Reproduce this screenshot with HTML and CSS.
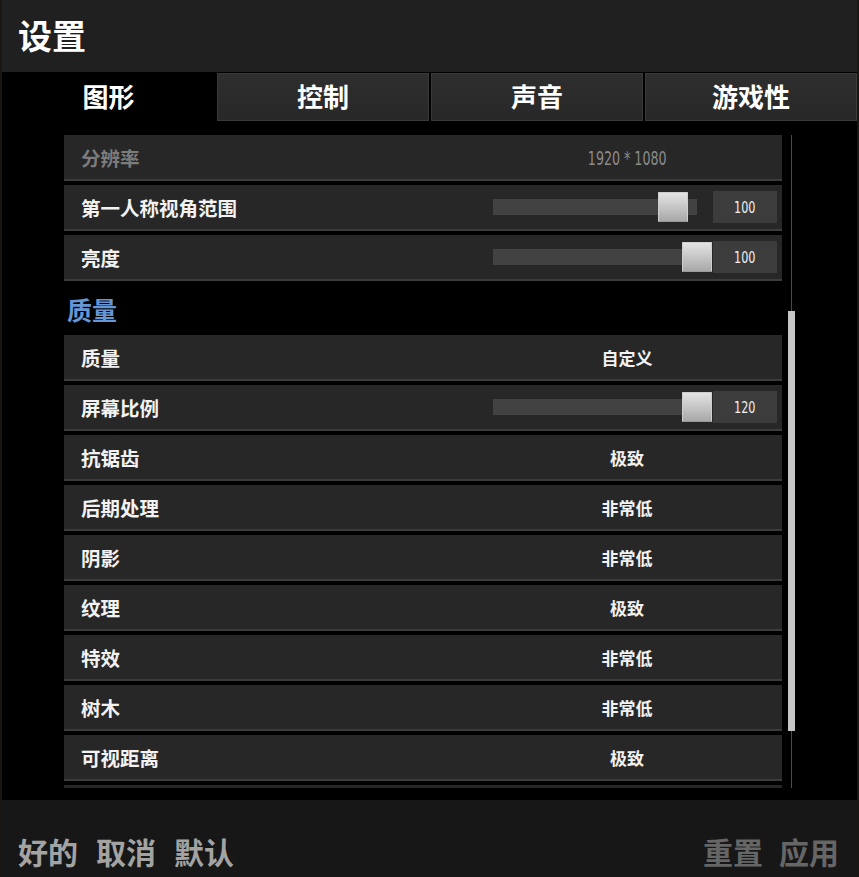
FILE: index.html
```html
<!DOCTYPE html>
<html lang="zh-CN">
<head>
<meta charset="utf-8">
<title>设置</title>
<link rel="stylesheet" href="styles.css">
</head>
<body>
<div class="app">
  <header class="header"><h1 class="title">设置</h1></header>
  <nav class="tabs">
    <div class="tab active">图形</div>
    <div class="tab">控制</div>
    <div class="tab">声音</div>
    <div class="tab">游戏性</div>
  </nav>
  <div class="content">
    <div class="rows">
      <div class="row disabled"><span class="label">分辨率</span><span class="value"><span class="num">1920 * 1080</span></span></div>
      <div class="row"><span class="label">第一人称视角范围</span>
        <div class="slider-cell"><div class="slider"><div class="track"></div><div class="thumb" style="left:165px"></div></div><div class="box"><span class="digits">100</span></div></div>
      </div>
      <div class="row"><span class="label">亮度</span>
        <div class="slider-cell"><div class="slider"><div class="track"></div><div class="thumb" style="left:189px"></div></div><div class="box"><span class="digits">100</span></div></div>
      </div>
      <div class="section">质量</div>
      <div class="row"><span class="label">质量</span><span class="value">自定义</span></div>
      <div class="row"><span class="label">屏幕比例</span>
        <div class="slider-cell"><div class="slider"><div class="track"></div><div class="thumb" style="left:189px"></div></div><div class="box"><span class="digits">120</span></div></div>
      </div>
      <div class="row"><span class="label">抗锯齿</span><span class="value">极致</span></div>
      <div class="row"><span class="label">后期处理</span><span class="value">非常低</span></div>
      <div class="row"><span class="label">阴影</span><span class="value">非常低</span></div>
      <div class="row"><span class="label">纹理</span><span class="value">极致</span></div>
      <div class="row"><span class="label">特效</span><span class="value">非常低</span></div>
      <div class="row"><span class="label">树木</span><span class="value">非常低</span></div>
      <div class="row"><span class="label">可视距离</span><span class="value">极致</span></div>
      <div class="row"></div>
    </div>
    <div class="scrollbar">
      <div class="line top"></div>
      <div class="sthumb"></div>
      <div class="line bottom"></div>
    </div>
  </div>
  <footer class="footer">
    <div class="actions left"><span>好的</span><span>取消</span><span>默认</span></div>
    <div class="actions right"><span>重置</span><span>应用</span></div>
  </footer>
</div>
</body>
</html>
```
FILE: styles.css
```css
* { box-sizing: border-box; }
html, body { margin: 0; padding: 0; }
body {
  background: #1c1613;
  font-family: "Noto Sans CJK SC", "Noto Sans", sans-serif;
  width: 859px;
  height: 877px;
  overflow: hidden;
}
.app {
  margin: 0 2px;
  width: 855px;
  height: 877px;
  background: #000;
  display: flex;
  flex-direction: column;
}
.header {
  height: 72px;
  flex: none;
  background: #202020;
  display: flex;
  align-items: center;
  padding-left: 16px;
  padding-bottom: 3px;
}
.title {
  margin: 0;
  font-size: 34px;
  line-height: 40px;
  font-weight: 700;
  color: #fff;
}
.tabs {
  margin-top: 1px;
  height: 48px;
  flex: none;
  display: grid;
  grid-template-columns: 213px 212px 212px 212px;
  column-gap: 2px;
}
.tab {
  display: flex;
  align-items: center;
  justify-content: center;
  padding-bottom: 3px;
  font-size: 26px;
  font-weight: 700;
  color: #fff;
  background: linear-gradient(#2e2e2e, #282828);
  border: 1px solid #3a3a3a;
}
.tab.active {
  background: #000;
  border-color: #000;
}
.content {
  margin-top: 14px;
  height: 653px;
  flex: none;
  display: flex;
  padding-left: 62px;
}
.rows {
  width: 718px;
  height: 653px;
  overflow: hidden;
  display: flex;
  flex-direction: column;
}
.row {
  flex: none;
  height: 46px;
  margin-bottom: 4px;
  background: #272727;
  border-bottom: 2px solid #3c3c3c;
  display: flex;
  align-items: center;
}
.label {
  flex: 1;
  padding-left: 17px;
  font-size: 19.5px;
  font-weight: 700;
  color: #f2f2f2;
}
.value {
  width: 310px;
  text-align: center;
  font-size: 17px;
  font-weight: 700;
  color: #f2f2f2;
}
.row.disabled .label { color: #7c7c7c; }
.num {
  display: inline-block;
  transform: scaleX(0.74);
  font-family: "DejaVu Sans Condensed", "Liberation Sans", sans-serif;
  font-stretch: condensed;
  font-weight: 400;
  font-size: 19px;
  color: #8a8a8a;
}
.slider-cell {
  width: 310px;
  display: flex;
  align-items: center;
  padding-left: 21px;
  padding-right: 5px;
}
.slider {
  position: relative;
  width: 220px;
  height: 32px;
  display: flex;
  align-items: center;
}
.track {
  width: 204px;
  height: 16px;
  background: #424242;
}
.thumb {
  position: absolute;
  top: 1px;
  width: 30px;
  height: 30px;
  background: linear-gradient(#e4e4e4, #a8a8a8);
  border: 1px solid #cfcfcf;
  border-bottom-color: #9a9a9a;
  border-radius: 1px;
}
.box {
  width: 64px;
  height: 32px;
  background: #3c3c3c;
  color: #f0f0f0;
  display: flex;
  align-items: center;
  justify-content: center;
}
.digits {
  display: inline-block;
  transform: scaleX(0.78);
  font-family: "DejaVu Sans Condensed", "Liberation Sans", sans-serif;
  font-size: 16px;
}
.section {
  flex: none;
  height: 50px;
  display: flex;
  align-items: center;
  padding-left: 3px;
  padding-bottom: 2px;
  font-size: 25px;
  font-weight: 700;
  color: #6796d4;
}
.scrollbar {
  margin-left: 6px;
  width: 7px;
  height: 653px;
  display: flex;
  flex-direction: column;
  align-items: center;
}
.line {
  width: 1px;
  background: #4a4a4a;
}
.line.top { height: 176px; }
.line.bottom { flex: 1; }
.sthumb {
  width: 7px;
  height: 420px;
  background: #c6c6c6;
}
.footer {
  margin-top: auto;
  height: 77px;
  flex: none;
  background: #171717;
  display: flex;
  justify-content: space-between;
  align-items: flex-end;
  padding: 0 18px 8px 16px;
}
.actions {
  display: flex;
  gap: 18px;
  font-size: 30px;
  line-height: 36px;
  font-weight: 700;
}
.actions.left { color: #a3a3a3; }
.actions.right { color: #666; gap: 16px; }
```
